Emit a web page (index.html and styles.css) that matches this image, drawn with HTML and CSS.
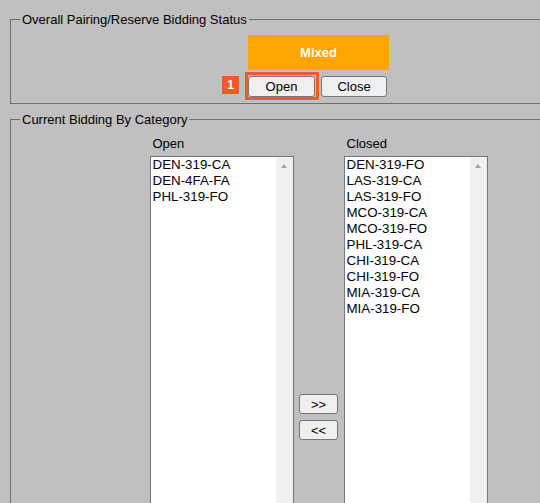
FILE: index.html
```html
<!DOCTYPE html>
<html>
<head>
<meta charset="utf-8">
<link rel="stylesheet" href="styles.css">
</head>
<body>
<div class="page">
  <fieldset class="group status-group">
    <legend class="group-title">Overall Pairing/Reserve Bidding Status</legend>
    <div class="status-center">
      <div class="status">
        <div class="status-box">Mixed</div>
        <div class="status-actions">
          <span class="highlight-wrap">
            <span class="badge">1</span>
            <button class="btn btn-action btn-highlight">Open</button>
          </span>
          <button class="btn btn-action btn-close">Close</button>
        </div>
      </div>
    </div>
  </fieldset>

  <fieldset class="group category-group">
    <legend class="group-title">Current Bidding By Category</legend>
    <div class="category-center">
      <div class="category-grid">
        <div class="col-label">Open</div>
        <div></div>
        <div class="col-label">Closed</div>

        <div class="listbox">
          <div class="list-items">
            <div class="opt">DEN-319-CA</div>
            <div class="opt">DEN-4FA-FA</div>
            <div class="opt">PHL-319-FO</div>
          </div>
          <div class="scrolltrack"><div class="scroll-up"><span class="arrow-up"></span></div></div>
        </div>

        <div class="move-col">
          <button class="btn btn-move">&gt;&gt;</button>
          <button class="btn btn-move">&lt;&lt;</button>
        </div>

        <div class="listbox">
          <div class="list-items">
            <div class="opt">DEN-319-FO</div>
            <div class="opt">LAS-319-CA</div>
            <div class="opt">LAS-319-FO</div>
            <div class="opt">MCO-319-CA</div>
            <div class="opt">MCO-319-FO</div>
            <div class="opt">PHL-319-CA</div>
            <div class="opt">CHI-319-CA</div>
            <div class="opt">CHI-319-FO</div>
            <div class="opt">MIA-319-CA</div>
            <div class="opt">MIA-319-FO</div>
          </div>
          <div class="scrolltrack"><div class="scroll-up"><span class="arrow-up"></span></div></div>
        </div>
      </div>
    </div>
  </fieldset>
</div>
</body>
</html>
```

FILE: styles.css
```css
html, body {
  margin: 0;
  padding: 0;
}
body {
  background: #c0c0c0;
  font-family: "Liberation Sans", Arial, sans-serif;
  font-size: 13px;
  color: #000;
  overflow: hidden;
  width: 540px;
  height: 503px;
}
.page {
  padding: 12px 0 0 10px;
  width: 617px;
}
.group {
  margin: 0;
  border: 1px solid #707070;
  padding: 0 9px;
  width: 617px;
  box-sizing: border-box;
  min-width: 0;
}
.group-title {
  padding: 0 2px;
  font-size: 13px;
  line-height: 15px;
}
.status-group {
  padding-top: 8px;
  padding-bottom: 6px;
}
.status-center {
  display: flex;
  justify-content: center;
}
.status {
  width: 141px;
  display: flex;
  flex-direction: column;
  gap: 6px;
}
.status-box {
  height: 35px;
  background: #ffa500;
  color: #fff;
  font-weight: bold;
  font-size: 13px;
  display: flex;
  align-items: center;
  justify-content: center;
}
.status-actions {
  display: flex;
  gap: 6px;
}
.highlight-wrap {
  position: relative;
  display: flex;
}
.highlight-wrap::after {
  content: "";
  position: absolute;
  left: -3px;
  right: -4px;
  top: -4px;
  bottom: -3px;
  border: 3px solid #f15a24;
  pointer-events: none;
}
.badge {
  position: absolute;
  right: calc(100% + 9px);
  top: 0;
  width: 17px;
  height: 18px;
  background: #f15a24;
  color: #fff;
  font-weight: bold;
  font-size: 12px;
  line-height: 18px;
  text-align: center;
}
.btn {
  font-family: "Liberation Sans", Arial, sans-serif;
  font-size: 13px;
  color: #000;
  background: #efefef;
  border: 1px solid #767676;
  border-radius: 3px;
  padding: 0;
  margin: 0;
  box-sizing: border-box;
}
.btn-action {
  height: 21px;
}
.btn-highlight {
  width: 67px;
}
.btn-close {
  width: 66px;
}
.category-group {
  margin-top: 8px;
  padding-top: 9px;
  height: 700px;
}
.category-center {
  display: flex;
  justify-content: center;
}
.category-grid {
  display: grid;
  grid-template-columns: 144px 50px 144px;
  grid-template-rows: 15px 522px;
  row-gap: 5px;
}
.col-label {
  padding-left: 3px;
  line-height: 15px;
  font-size: 13px;
}
.listbox {
  border: 1px solid #767676;
  background: #fff;
  display: flex;
  box-sizing: border-box;
}
.list-items {
  flex: 1;
  font-size: 13.333px;
}
.opt {
  padding: 0 2px 1px;
  line-height: 15px;
  white-space: nowrap;
}
.scrolltrack {
  width: 17px;
  background: #f0f0f0;
}
.scroll-up {
  height: 17px;
  display: flex;
  align-items: center;
  justify-content: center;
}
.arrow-up {
  width: 0;
  height: 0;
  border-left: 3.5px solid transparent;
  border-right: 3.5px solid transparent;
  border-bottom: 4px solid #a3a3a3;
}
.move-col {
  display: flex;
  flex-direction: column;
  align-items: center;
  justify-content: center;
  gap: 6px;
}
.btn-move {
  width: 39px;
  height: 20px;
}
```
